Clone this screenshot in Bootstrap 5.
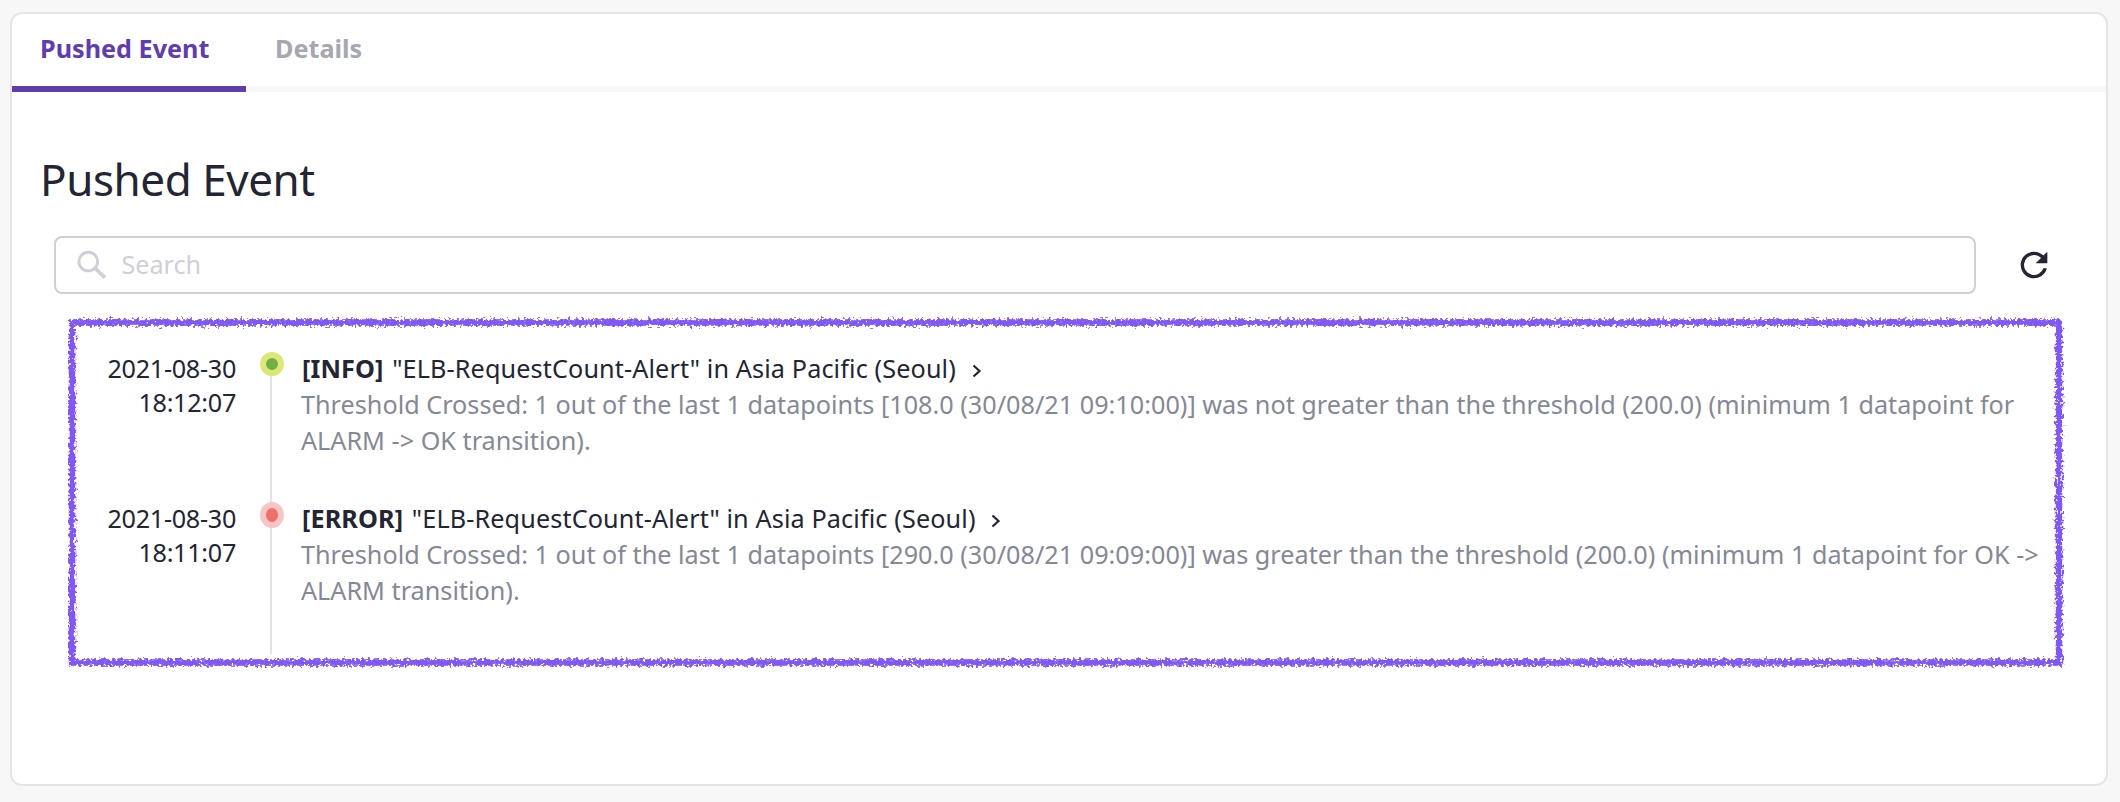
<!DOCTYPE html>
<html lang="en">
<head>
<meta charset="utf-8">
<meta name="viewport" content="width=device-width, initial-scale=1">
<title>Pushed Event</title>
<link href="https://cdn.jsdelivr.net/npm/bootstrap@5.3.0/dist/css/bootstrap.min.css" rel="stylesheet">
<style>
  body { background: #f7f7f7; color: #232533; font-family: "Noto Sans", sans-serif; font-size: 25.2px; padding: 12px 12px 0 10px; overflow: hidden; }
  .panel { height: 774px; border: 2px solid #e5e5e5; border-radius: 12px; overflow: hidden; }
  .tabs { height: 78px; box-shadow: inset 0 -6px #f7f7f7; }
  .tabs .nav-link { padding: 0 36px 0 29px; line-height: 68px; height: 78px; font-weight: 700; font-size: 25.2px; color: #a5a8b1; border-radius: 0; border-bottom: 6px solid transparent; white-space: nowrap; }
  .tabs .nav-link.active { width: 234px; padding-left: 28px; color: #5f3dae; border-color: #5f3dae; }
  .heading { font-size: 44px; line-height: 60px; margin: 57px 0 0 28px; font-weight: 400; letter-spacing: -.45px; }
  .search-row { margin: 27px 52px 0 42px; }
  .search-box { width: 1922px; height: 58px; border: 2px solid #cfd0d7; border-radius: 8px; padding-left: 20px; }
  .search-box input { font-size: 25.2px; color: #232533; padding: 0 0 2px 12px; line-height: 50px; }
  .search-box input::placeholder { color: #cfd0d7; opacity: 1; }
  .timeline { margin: 22px 40px 0 56px; height: 350px; padding: 34px 0 0 0; }
  .frame { left: 0; top: 0; pointer-events: none; }
  .event { height: 150px; }
  .when { width: 168px; line-height: 34px; padding-top: 1px; text-align: right; letter-spacing: -.3px; }
  .track { width: 24px; margin: 2px 17px 0 24px; }
  .track::before { content: ""; position: absolute; left: 10px; top: 12px; width: 2px; height: 150px; background: #e3e3e6; }
  .event:last-of-type .track::before { height: 140px; }
  .dot { position: relative; width: 24px; height: 24px; border-radius: 50%; border: 6px solid; }
  .dot-ok { border-color: #dbe878; background: #73b043; }
  .dot-error { height: 26px; border-color: #f7c5c5; background: #ee716d; }
  .what { line-height: 36px; }
  .title { letter-spacing: .13px; padding-left: 1px; }
  .title b { margin-right: 2px; }
  .title svg { margin-left: 9px; }
  .what p { color: #858895; letter-spacing: .016px; }
</style>
</head>
<body>
<main class="panel bg-white">
  <ul class="nav tabs flex-nowrap">
    <li class="nav-item"><a class="nav-link active" href="#">Pushed Event</a></li>
    <li class="nav-item"><a class="nav-link" href="#">Details</a></li>
  </ul>
  <h1 class="heading">Pushed Event</h1>
  <div class="search-row d-flex align-items-center justify-content-between">
    <div class="search-box d-flex align-items-center">
      <svg width="34" height="34" viewBox="0 0 34 34" fill="none" stroke="#cfd0d7"><circle cx="12.5" cy="13.5" r="9.5" stroke-width="3"/><path d="M19 20l10.5 9.8" stroke-width="3.8"/></svg>
      <input class="form-control border-0 shadow-none bg-transparent" type="text" placeholder="Search">
    </div>
    <svg width="40" height="40" viewBox="0 0 24 24" fill="#232533"><path d="M17.65 6.35A7.96 7.96 0 0 0 12 4a8 8 0 1 0 7.73 10h-2.08A6 6 0 1 1 12 6c1.66 0 3.14.69 4.22 1.78L13 11h7V4z"/></svg>
  </div>
  <section class="timeline position-relative">
    <div class="event d-flex">
      <time class="when flex-shrink-0">2021-08-30<br>18:12:07</time>
      <div class="track position-relative flex-shrink-0"><div class="dot dot-ok"></div></div>
      <div class="what text-nowrap"><div class="title"><b>[INFO]</b> "ELB-RequestCount-Alert" in Asia Pacific (Seoul)
        <svg width="10" height="14" viewBox="0 0 10 14" fill="none" stroke="#232533" stroke-width="2.2"><path d="M1.5 1.5L7.5 7l-6 5.5"/></svg></div>
        <p class="mb-0">Threshold Crossed: 1 out of the last 1 datapoints [108.0 (30/08/21 09:10:00)] was not greater than the threshold (200.0) (minimum 1 datapoint for<br>ALARM -&gt; OK transition).</p></div>
    </div>
    <div class="event d-flex">
      <time class="when flex-shrink-0">2021-08-30<br>18:11:07</time>
      <div class="track position-relative flex-shrink-0"><div class="dot dot-error"></div></div>
      <div class="what text-nowrap"><div class="title"><b>[ERROR]</b> "ELB-RequestCount-Alert" in Asia Pacific (Seoul)
        <svg width="10" height="14" viewBox="0 0 10 14" fill="none" stroke="#232533" stroke-width="2.2"><path d="M1.5 1.5L7.5 7l-6 5.5"/></svg></div>
        <p class="mb-0">Threshold Crossed: 1 out of the last 1 datapoints [290.0 (30/08/21 09:09:00)] was greater than the threshold (200.0) (minimum 1 datapoint for OK -&gt;<br>ALARM transition).</p></div>
    </div>
    <svg class="frame position-absolute" width="1998" height="354" viewBox="0 0 1998 354" fill="none">
      <filter id="crayon" filterUnits="userSpaceOnUse" x="0" y="0" width="1998" height="354">
        <feTurbulence type="fractalNoise" baseFrequency=".36" numOctaves="2" seed="4" result="n"/>
        <feDisplacementMap in="SourceGraphic" in2="n" scale="9" xChannelSelector="R" yChannelSelector="G"/>
      </filter>
      <rect x="4" y="6.5" width="1987" height="340" stroke="#8158f5" stroke-width="6.6" filter="url(#crayon)"/>
    </svg>
  </section>
</main>
<script src="https://cdn.jsdelivr.net/npm/bootstrap@5.3.0/dist/js/bootstrap.bundle.min.js"></script>
</body>
</html>
